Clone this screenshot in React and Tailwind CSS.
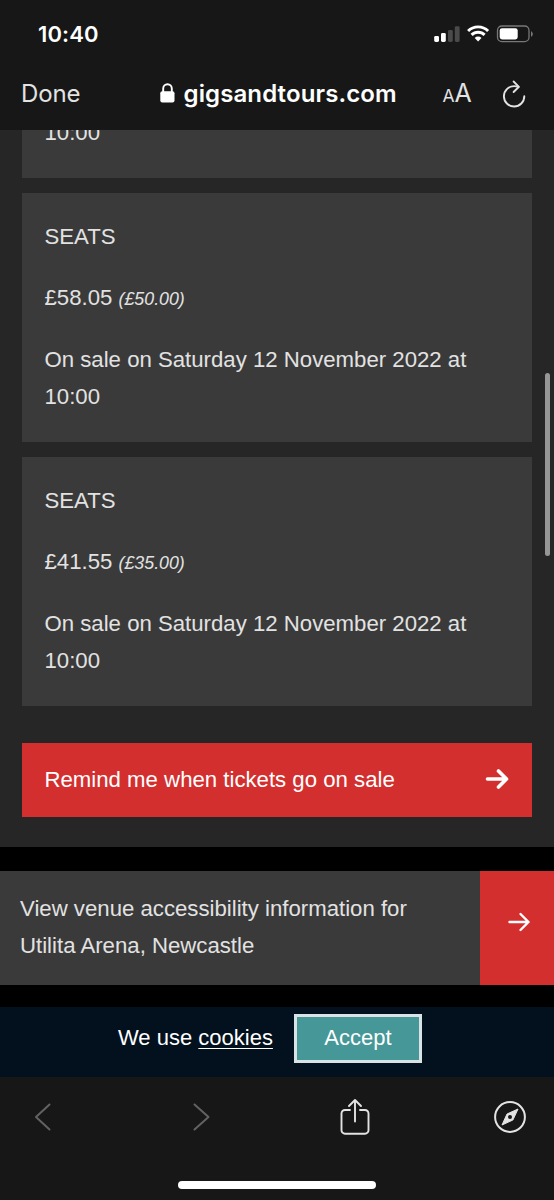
import React from "react";

const tickets = [
  { id: 1, type: "SEATS", price: "£58.05", face: "(£50.00)" },
  { id: 2, type: "SEATS", price: "£41.55", face: "(£35.00)" },
];

const StatusBar = () => (
  <div className="flex h-[68px] items-center justify-between pl-[38px] pr-[21px] text-white">
    <span className="text-[22px] font-semibold tracking-[0.1px]">10:40</span>
    <svg width="99" height="18" viewBox="0 0 99 18" fill="none">
      <rect x="0.2" y="10.9" width="4.800" height="6" rx="1.400" fill="#fff" />
      <rect x="7" y="7.900" width="4.800" height="9" rx="1.400" fill="#fff" />
      <rect x="14" y="4.900" width="4.800" height="12" rx="1.400" fill="#4a4a4a" />
      <rect x="20.800" y="1.200" width="4.800" height="15.700" rx="1.400" fill="#4a4a4a" />
      <g stroke="#fff" strokeWidth="2.900">
        <path d="M34.100 6.100a14 14 0 0 1 20 0" />
        <path d="M37.600 9.900a9.200 9.200 0 0 1 13 0" />
      </g>
      <path d="M40.700 13a4.800 4.800 0 0 1 6.800 0l-3.400 3.500z" fill="#fff" />
      <rect x="63.500" y="1" width="31.500" height="15.700" rx="4.400" stroke="#787878" strokeWidth="1.300" />
      <rect x="65.700" y="3.200" width="18" height="11.300" rx="2.400" fill="#fff" />
      <path d="M97 6.200c2.400 1 2.400 4.600 0 5.600z" fill="#787878" />
    </svg>
  </div>
);

const AddressBar = () => (
  <div className="flex h-[62px] items-center pb-[10px] pl-[21px] text-[#e3e3e3]">
    <span className="w-[138.500px] text-[24px] tracking-[-0.1px]">Done</span>
    <svg className="-mt-[2px]" width="15" height="20" viewBox="0 0 15 20" fill="none">
      <path d="M3.200 9V5.500a4.300 4.300 0 0 1 8.600 0V9" stroke="#fff" strokeWidth="1.900" />
      <rect x="0.300" y="8.300" width="14.200" height="11.200" rx="2" fill="#fff" />
    </svg>
    <span className="ml-[9px] w-[259px] text-[24px] font-semibold tracking-[0.12px] text-white">
      gigsandtours.com
    </span>
    <span className="flex w-[59.500px] items-baseline">
      <span className="text-[17.500px]">A</span>
      <span className="text-[25px]">A</span>
    </span>
    <svg width="24" height="28" viewBox="0 0 24 28" fill="none" stroke="#e3e3e3" strokeWidth="1.900" strokeLinecap="round" strokeLinejoin="round">
      <path d="M22.300 16.300A10.200 10.200 0 1 1 12.100 6.100q2.400 0 4.300.8" />
      <path d="M11.600 1.500l5.300 5.300-5.300 5.200" />
    </svg>
  </div>
);

const TicketCard = ({ type, price, face }) => (
  <article className="h-[249px] bg-[#3a3a3a] pl-[22.500px] pr-[22px] pt-[25px]">
    <h2>{type}</h2>
    <p className="mt-6">
      {price} <em className="text-[17.800px] leading-none">{face}</em>
    </p>
    <p className="mt-[25px]">On sale on Saturday 12 November 2022 at 10:00</p>
  </article>
);

const ArrowIcon = ({ weight }) => (
  <svg width="24" height="22" viewBox="0 0 24 22" fill="none" stroke="#fff" strokeWidth={weight} strokeLinecap="round" strokeLinejoin="round">
    <path d="M2.500 11h19M13.500 3l8 8-8 8" />
  </svg>
);

const Toolbar = () => (
  <footer className="flex h-[123px] flex-col bg-[#171717]">
    <div className="flex h-20 items-center pl-[34px]">
      <svg width="18" height="30" viewBox="0 0 18 30" fill="none" stroke="#626262" strokeWidth="2" strokeLinecap="round" strokeLinejoin="round">
        <path d="M15.500 2.500L2 15l13.500 12.500" />
      </svg>
      <svg className="ml-[140px]" width="18" height="30" viewBox="0 0 18 30" fill="none" stroke="#626262" strokeWidth="2" strokeLinecap="round" strokeLinejoin="round">
        <path d="M2.500 2.500L16.500 15l-14 12.500" />
      </svg>
      <svg className="ml-[129.500px]" width="30" height="38" viewBox="0 0 30 38" fill="none" stroke="#e3e3e3" strokeWidth="1.900" strokeLinecap="round" strokeLinejoin="round">
        <path d="M10 12H5a3.500 3.500 0 0 0-3.500 3.500v16.700A3.500 3.500 0 0 0 5 35.700h20a3.500 3.500 0 0 0 3.500-3.500V15.500A3.500 3.500 0 0 0 25 12h-5" />
        <path d="M15 23.500V2M9 8l6-6 6 6" />
      </svg>
      <svg className="ml-[123.500px]" width="34" height="34" viewBox="0 0 34 34" fill="none">
        <circle cx="17" cy="17" r="14.900" stroke="#e3e3e3" strokeWidth="2" />
        <path d="M25 9L19.900 20 9 25l5-11z" fill="#e3e3e3" stroke="#e3e3e3" strokeLinejoin="round" />
        <circle cx="17" cy="17" r="2" fill="#171717" />
      </svg>
    </div>
    <div className="ml-[178px] mt-[23.500px] h-2 w-[198px] rounded-full bg-white" />
  </footer>
);

const App = () => {
  return (
    <div className="relative flex h-[1200px] w-[554px] flex-col overflow-hidden bg-black">
      <header className="h-[130px] bg-[#171717] font-['Inter',sans-serif]">
        <StatusBar />
        <AddressBar />
      </header>

      <main className="flex h-[947px] flex-col font-['Liberation_Sans',Arial,sans-serif] text-[22.200px] leading-[37px] text-[#e2e2e2]">
        {/* Ticket list */}
        <section className="flex h-[717px] flex-col bg-[#262626] px-[22px]">
          <div className="mb-[15px] flex h-12 flex-col justify-end overflow-hidden bg-[#3a3a3a] px-[22.500px] pb-[27px]">
            <p>10:00</p>
          </div>
          <div className="flex flex-col gap-[15px]">
            {tickets.map((ticket) => (
              <TicketCard key={ticket.id} {...ticket} />
            ))}
          </div>
          <button className="mt-[37px] flex h-[74px] shrink-0 items-center justify-between bg-[#d42f2f] pb-[2px] pl-[22.500px] pr-[23px] text-white">
            <span>Remind me when tickets go on sale</span>
            <ArrowIcon weight={3.6} />
          </button>
        </section>

        {/* Venue accessibility */}
        <a className="mt-6 flex h-[114px] bg-[#3a3a3a]">
          <p className="w-[480px] pl-5 pt-[19px]">
            View venue accessibility information for
            <br />
            Utilita Arena, Newcastle
          </p>
          <span className="flex flex-1 items-center justify-center bg-[#d42f2f] pb-[12px] pl-1">
            <ArrowIcon weight={2.4} />
          </span>
        </a>

        {/* Cookie notice */}
        <div className="mt-[22px] flex h-[70px] bg-[#03101d] pl-[118px] pt-[7px] text-[22px] text-white">
          <p className="w-[176px] pt-[5px]">
            We use <span className="underline decoration-1 underline-offset-[3px]">cookies</span>
          </p>
          <button className="h-[49px] w-[128px] border-[3px] border-[#d9e2e5] bg-[#459798] pb-[3px]">Accept</button>
        </div>
      </main>

      <Toolbar />

      {/* Scroll indicator */}
      <div className="absolute left-[545px] top-[373px] h-[183px] w-[5px] rounded-full bg-[#969696]" />
    </div>
  );
};

export default App;
